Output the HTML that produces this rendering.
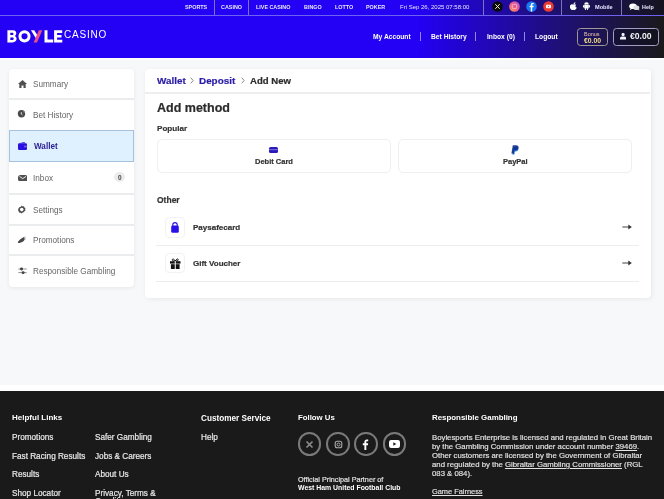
<!DOCTYPE html>
<html><head><meta charset="utf-8">
<style>
*{box-sizing:border-box;margin:0;padding:0}
html,body{width:664px;height:499px;overflow:hidden;background:#f6f8fa;font-family:"Liberation Sans",sans-serif}
.a{position:absolute;white-space:nowrap}
svg{position:absolute;display:block}
.a,.t,.nav,.lbl,.mt,.ft,.fh,.fp{will-change:transform}
#top{position:absolute;left:0;top:0;width:664px;height:16px;background:linear-gradient(90deg,#2400f4 0%,#2400f4 63%,#1c1260 86%,#15131f 100%)}
#top .line{position:absolute;left:0;top:15px;width:664px;height:1px;background:#6f62f0}
.t{position:absolute;top:3.8px;font-size:5.4px;line-height:6px;font-weight:700;color:#e8e6ff;white-space:nowrap}
.sep{position:absolute;top:0;width:1px;height:15px;background:#7c74c0}
#hdr{position:absolute;left:0;top:16px;width:664px;height:42px;background:linear-gradient(90deg,#2400f4 0%,#2400f4 63%,#1a1a1a 100%)}
.nav{position:absolute;top:33px;font-size:6.7px;line-height:7px;font-weight:700;color:#fff;white-space:nowrap}
.nsep{position:absolute;top:32px;width:1px;height:9px;background:#8f86f0}
#sb{position:absolute;left:9px;top:69px;width:125px;height:218px;background:#fff;border-radius:4px;box-shadow:0 1px 4px rgba(0,0,0,.07)}
.lbl{position:absolute;left:33px;font-size:8.2px;line-height:9px;color:#666;white-space:nowrap}
.sdiv{position:absolute;left:9px;width:125px;height:2px;background:#ebecee}
#main{position:absolute;left:145px;top:69px;width:506px;height:229px;background:#fff;border-radius:4px;box-shadow:1px 1px 5px rgba(0,0,0,.07)}
.mt{position:absolute;-webkit-text-stroke-width:0.2px;font-weight:700;color:#2b2b2b;white-space:nowrap}
.pbox{position:absolute;top:139px;height:34px;border:1px solid #efefef;border-radius:5px}
.ibox{position:absolute;left:165px;width:20px;height:21px;border:1px solid #f2f2f2;border-radius:4px}
.mdiv{position:absolute;left:156px;width:483px;height:1px;background:#ededed}
#foot{position:absolute;left:0;top:391px;width:664px;height:108px;background:#1a1a1a}
.ft{position:absolute;-webkit-text-stroke:0.2px #e8e8e8;color:#e8e8e8;font-size:8.2px;line-height:9px;white-space:nowrap}
.fh{position:absolute;color:#fff;font-size:8px;line-height:9px;font-weight:700;white-space:nowrap}
.fp{position:absolute;-webkit-text-stroke:0.15px #e4e4e4;color:#e4e4e4;font-size:7.77px;line-height:9px;white-space:nowrap}
.circ{position:absolute;top:432px;width:23.5px;height:23.5px;border:2px solid #7a7a7a;border-radius:50%}
</style></head><body>

<!-- TOP BAR -->
<div id="top">
  <div class="line"></div>
  <div class="t" style="left:185px">SPORTS</div>
  <div class="sep" style="left:214px"></div>
  <div class="t" style="left:221px">CASINO</div>
  <div class="sep" style="left:248px"></div>
  <div class="t" style="left:256px">LIVE CASINO</div>
  <div class="t" style="left:304px">BINGO</div>
  <div class="t" style="left:335px">LOTTO</div>
  <div class="t" style="left:366px">POKER</div>
  <div class="t" style="left:399.5px;font-size:6px;font-weight:400">Fri Sep 26, 2025 07:58:00</div>
  <div class="sep" style="left:483px"></div>
  <div class="sep" style="left:561px"></div>
  <div class="sep" style="left:621px"></div>
  <!-- social -->
  <svg style="left:492px;top:1px" width="11" height="11" viewBox="0 0 11 11"><circle cx="5.5" cy="5.5" r="5.3" fill="#0b0b0b"/><path d="M3.3 3.2L7.7 7.8M7.7 3.2L3.3 7.8" stroke="#f0f0d0" stroke-width="1"/></svg>
  <svg style="left:509px;top:1px" width="11" height="11" viewBox="0 0 11 11"><defs><linearGradient id="ig" x1="0" y1="1" x2="1" y2="0"><stop offset="0" stop-color="#f9a04a"/><stop offset=".5" stop-color="#ee5a8a"/><stop offset="1" stop-color="#b055d8"/></linearGradient></defs><circle cx="5.5" cy="5.5" r="5.3" fill="url(#ig)"/><rect x="3.3" y="3.3" width="4.4" height="4.4" rx="1.2" fill="none" stroke="#fdd" stroke-width=".7"/></svg>
  <svg style="left:526px;top:1px" width="11" height="11" viewBox="0 0 11 11"><circle cx="5.5" cy="5.5" r="5.3" fill="#1877f2"/><path d="M6.2 10.5V6.2h1.3l.2-1.4H6.2V4c0-.4.1-.7.7-.7h.8V2.1c-.2 0-.6-.1-1.1-.1-1.1 0-1.8.6-1.8 1.8v1H3.6v1.4h1.2v4.3z" fill="#fff"/></svg>
  <svg style="left:543px;top:1px" width="11" height="11" viewBox="0 0 11 11"><circle cx="5.5" cy="5.5" r="5.3" fill="#ee3b32"/><rect x="3" y="3.8" width="5" height="3.4" rx=".8" fill="#fff"/><path d="M4.9 4.6v1.8l1.4-.9z" fill="#ee3b32"/></svg>
  <!-- mobile -->
  <svg style="left:570px;top:2px" width="8" height="8" viewBox="0 0 8 8"><path d="M5.4 0.3c.1.6-.2 1.2-.6 1.5-.4.4-.9.5-1.3.5 0-.5.2-1 .5-1.3.4-.4.9-.6 1.4-.7zM6.9 5.6c-.3.7-.5 1-.9 1.5-.5.6-1 1-1.5.9-.5 0-.6-.3-1.2-.3s-.8.3-1.2.3c-.6 0-1-.5-1.4-1C-.5 5.6-.3 3.8.5 3c.4-.5 1-.7 1.5-.7.6 0 .9.3 1.4.3.5 0 .8-.3 1.4-.3.5 0 1 .2 1.4.7-1.2.7-1 2.4.7 2.6z" fill="#fff"/></svg>
  <svg style="left:582px;top:2px" width="9" height="8" viewBox="0 0 9 8"><path d="M2.2 2.4a2.3 2.1 0 0 1 4.6 0z" fill="#fff"/><rect x="2.2" y="2.8" width="4.6" height="3.6" rx=".5" fill="#fff"/><rect x="1" y="2.9" width="1" height="2.6" rx=".5" fill="#fff"/><rect x="7" y="2.9" width="1" height="2.6" rx=".5" fill="#fff"/><rect x="3" y="6" width="1" height="2" rx=".5" fill="#fff"/><rect x="5" y="6" width="1" height="2" rx=".5" fill="#fff"/></svg>
  <div class="t" style="left:594.7px;font-size:5.6px">Mobile</div>
  <!-- help -->
  <svg style="left:629px;top:3px" width="11" height="8" viewBox="0 0 11 8"><ellipse cx="4" cy="3.2" rx="3.8" ry="2.8" fill="#fff"/><path d="M1.5 5.2L0.8 7.2 3 5.8z" fill="#fff"/><ellipse cx="7.3" cy="4.8" rx="3" ry="2.3" fill="#ddd"/><path d="M9 6.5l1.3 1.3-.2-2z" fill="#ddd"/></svg>
  <div class="t" style="left:642px">Help</div>
</div>

<!-- HEADER -->
<div id="hdr"></div>
<div class="a" style="left:0;top:58px;width:664px;height:2px;background:#fdfdfe"></div>
<svg style="left:0;top:0" width="120" height="58" viewBox="0 0 120 58">
<path fill="#fff" fill-rule="evenodd" d="M7.4 30.3H13C15.5 30.3 16.3 31.8 16.3 33.3C16.3 34.5 15.6 35.4 14.8 35.9C16 36.4 16.6 37.5 16.6 38.8C16.6 40.9 15 42.4 12.6 42.4H7.4ZM10.3 32.8H12.4C13.1 32.8 13.4 33.3 13.4 33.9C13.4 34.5 13.1 35 12.4 35H10.3ZM10.3 37.4H12.7C13.4 37.4 13.7 38 13.7 38.6C13.7 39.3 13.4 39.9 12.7 39.9H10.3Z"/>
<circle cx="24.5" cy="36.35" r="4.55" stroke="#fff" stroke-width="3" fill="none"/>
<path fill="#fff" d="M30.9 30.3H34.2L37.4 35.3 35.7 38.1Z"/>
<path fill="#e8508a" d="M38.9 30.3H42.3L37 42.4H33.6Z"/>
<path fill="#fff" d="M44.5 30.3H47.5V39.5H53.2V42.4H44.5Z"/>
<path fill="#fff" d="M54.1 30.3H62.2V33H57.1V35H61.5V37.6H57.1V39.7H62.3V42.4H54.1Z"/>
</svg>
<div class="a" style="left:64px;top:29.5px;font-size:10px;line-height:10px;letter-spacing:0.8px;color:#fff">CASINO</div>
</div>
<div class="nav" style="left:373px">My Account</div>
<div class="nsep" style="left:420px"></div>
<div class="nav" style="left:431px">Bet History</div>
<div class="nsep" style="left:475px"></div>
<div class="nav" style="left:487px">Inbox (0)</div>
<div class="nsep" style="left:524px"></div>
<div class="nav" style="left:535px">Logout</div>
<div class="a" style="left:576.5px;top:27.5px;width:30.5px;height:18.3px;border:1.8px solid #a09a94;border-radius:3.5px"></div>
<div class="a" style="left:583.5px;top:31px;font-size:5.5px;line-height:6px;color:#eccaae">Bonus</div>
<div class="a" style="left:583.5px;top:37px;font-size:6.8px;line-height:7px;font-weight:700;color:#f4de88">€0.00</div>
<div class="a" style="left:613px;top:27.5px;width:46px;height:18.3px;border:1.8px solid #a39dc6;border-radius:3.5px;background:rgba(10,8,25,.35)"></div>
<svg style="left:620px;top:33.2px" width="6.2" height="6.4" viewBox="0 0 6.2 6.4"><rect x="1.6" y="0" width="3" height="3" rx="1.1" fill="#f4f2ff"/><path d="M0 6.4V5.2C0 4.1 1 3.5 3.1 3.5S6.2 4.1 6.2 5.2V6.4z" fill="#f4f2ff"/></svg>
<div class="a" style="left:630px;top:32px;font-size:8.6px;line-height:9px;font-weight:700;color:#f2f2f2">€0.00</div>

<!-- SIDEBAR -->
<div id="sb"></div>
<div class="sdiv" style="top:97.6px"></div>
<div class="sdiv" style="top:192.9px"></div>
<div class="sdiv" style="top:223.6px"></div>
<div class="sdiv" style="top:254px"></div>
<div class="a" style="left:9px;top:130px;width:125px;height:32px;background:#dff0fe;border:1px solid #a6c2dc"></div>

<svg style="left:17.5px;top:80px" width="9" height="8" viewBox="0 0 9 8"><path d="M4.5 0L9 4H7.7V8H5.5V5.5H3.5V8H1.3V4H0z" fill="#505050"/></svg>
<div class="lbl" style="top:79.5px">Summary</div>

<svg style="left:17.2px;top:110.2px" width="9" height="7.6" viewBox="0 0 9 7.6"><circle cx="4.5" cy="3.8" r="3.7" fill="#4a4a4a"/><path d="M6.3 .6A3.7 3.7 0 0 1 8.1 2.6L6.6 2.4z" fill="#999"/><path d="M4.3 2.2V4L5.5 4.9" stroke="#fff" stroke-width=".8" fill="none"/></svg>
<div class="lbl" style="top:110.5px">Bet History</div>

<svg style="left:18px;top:142px" width="9" height="8" viewBox="0 0 9 8"><path d="M1.2 1.2L6.5 0 7 1.2z" fill="#2a10e0"/><rect x="0" y="1.2" width="9" height="6.8" rx="1.2" fill="#2a10e0"/><rect x="6" y="3.6" width="3" height="2" rx=".8" fill="#6a5cf0"/></svg>
<div class="a" style="left:34px;top:142px;font-size:8.15px;line-height:9px;font-weight:700;color:#2d2295">Wallet</div>

<svg style="left:17.5px;top:174.5px" width="9.5" height="6.5" viewBox="0 0 9.5 6.5"><rect x="0" y="0" width="9.5" height="6.5" rx="2.5" fill="#505050"/><path d="M1.5 1.4L4.75 3.6 8 1.4" stroke="#fff" stroke-width=".9" fill="none"/></svg>
<div class="lbl" style="top:173.5px">Inbox</div>
<div class="a" style="left:114px;top:172px;width:11px;height:10px;border-radius:5px;background:#ececec"></div>
<div class="a" style="left:117.5px;top:173.8px;font-size:6.5px;line-height:7px;font-weight:700;color:#444">0</div>

<svg style="left:17.3px;top:204.8px" width="9.5" height="9.2" viewBox="0 0 10 9"><path d="M5 .3l1 .9 1.3-.2.4 1.3 1.2.6-.4 1.3.5 1.2-1.2.6-.3 1.3-1.3-.1L5 8.7l-1-.9-1.3.2-.4-1.3-1.2-.6.4-1.3L1 3.6l1.2-.6.3-1.3 1.3.1z" fill="#4c4c4c"/><circle cx="5" cy="4.5" r="1.9" fill="#fff"/></svg>
<div class="lbl" style="top:205.5px">Settings</div>

<svg style="left:17px;top:236px" width="9" height="8" viewBox="0 0 9 8"><path d="M.7 6.2C1.5 4.8 3 3.2 4.4 2.4L6.6 1.1 7.9 3.6 6.2 5.4C4.8 6.2 3 7 1.3 7.1z" fill="#484848"/><path d="M6.6 1.1L8.2 .6 8.8 3 7.9 3.6z" fill="#aaa"/></svg>
<div class="lbl" style="top:235.5px">Promotions</div>

<svg style="left:17.5px;top:267.3px" width="9" height="7.5" viewBox="0 0 9 7.5"><path d="M.3 2h8.4M.3 5.6h8.4" stroke="#888" stroke-width=".9"/><rect x="2" y=".6" width="3" height="2.8" rx="1.3" fill="#444"/><rect x="3.6" y="4.2" width="3" height="2.8" rx="1.3" fill="#444"/></svg>
<div class="lbl" style="top:266.5px">Responsible Gambling</div>

<!-- MAIN -->
<div id="main"></div>
<div class="a" style="left:145px;top:92px;width:505px;height:1.5px;background:#eeeeef"></div>
<div class="mt" style="left:156.5px;top:75.5px;font-size:9.9px;line-height:10px;color:#2a1ca6">Wallet</div>
<svg style="left:190px;top:77px" width="4" height="7" viewBox="0 0 4 7"><path d="M.7.7L3.2 3.5.7 6.3" stroke="#888" stroke-width="1" fill="none"/></svg>
<div class="mt" style="left:199px;top:75.5px;font-size:9.9px;line-height:10px;color:#2a1ca6">Deposit</div>
<svg style="left:240.5px;top:77px" width="4" height="7" viewBox="0 0 4 7"><path d="M.7.7L3.2 3.5.7 6.3" stroke="#888" stroke-width="1" fill="none"/></svg>
<div class="mt" style="left:249.5px;top:75.5px;font-size:9.6px;line-height:10px;color:#2b2b2b">Add New</div>

<div class="mt" style="left:156.5px;top:101.5px;font-size:12.5px;line-height:13px">Add method</div>
<div class="mt" style="left:156.5px;top:124px;font-size:8.1px;line-height:9px;color:#333">Popular</div>

<div class="pbox" style="left:156.5px;width:234px"></div>
<svg style="left:268.8px;top:146.8px" width="9" height="6" viewBox="0 0 9 6"><rect x="0" y="0" width="9" height="6" rx="1.6" fill="#2a1ab8"/><rect x="0" y="2" width="9" height="1.2" fill="#6a60e0"/></svg>
<div class="mt" style="left:254.5px;top:157.5px;font-size:7.5px;line-height:8px;color:#333">Debit Card</div>

<div class="pbox" style="left:397.5px;width:234.5px"></div>
<svg style="left:510.5px;top:144.8px" width="8" height="10" viewBox="0 0 8 10"><path d="M2.8 2h2.5c1.6 0 2.3.8 2.1 2.1-.2 1.6-1.3 2.4-2.8 2.4h-.8L3.4 9.6H1.3z" fill="#1d78d8"/><path d="M1.8.2h3.3c1.8 0 2.7.9 2.5 2.4-.2 1.8-1.5 2.7-3.2 2.7H3.3L2.8 8.5H.4z" fill="#0f2f8a" opacity=".9"/></svg>
<div class="mt" style="left:503px;top:157.5px;font-size:7.5px;line-height:8px;color:#333">PayPal</div>

<div class="mt" style="left:156.5px;top:196px;font-size:8.5px;line-height:9px;color:#333">Other</div>

<div class="ibox" style="top:217px"></div>
<svg style="left:171px;top:221.5px" width="8" height="11" viewBox="0 0 8 11"><path d="M1.8 4V2.8a2.2 2.2 0 0 1 4.4 0V4" stroke="#2a10e8" stroke-width="1.1" fill="none"/><rect x=".2" y="3.6" width="7.6" height="7.2" rx="1.4" fill="#2a10e8"/></svg>
<div class="mt" style="left:193px;top:222.5px;font-size:8px;line-height:9px;color:#333">Paysafecard</div>
<svg style="left:621.5px;top:224px" width="10" height="6" viewBox="0 0 10 6"><path d="M0.3 3H7" stroke="#555" stroke-width="1.1"/><path d="M6.3 .6L9.8 3 6.3 5.4z" fill="#333"/></svg>
<div class="mdiv" style="top:245px"></div>

<div class="ibox" style="top:253px;height:20px"></div>
<svg style="left:170px;top:257.5px" width="10.5" height="11" viewBox="0 0 10.5 11"><path d="M5.25 3C4 .5 2 .6 2.2 2 2.4 3 4.2 3 5.25 3 6.3 3 8.1 3 8.3 2 8.5.6 6.5.5 5.25 3z" stroke="#111" stroke-width="1" fill="none"/><rect x="0" y="3.2" width="10.5" height="2.4" fill="#111"/><rect x=".9" y="6.2" width="8.7" height="4.8" fill="#111"/><rect x="4.75" y="3" width="1" height="8" fill="#fff"/></svg>
<div class="mt" style="left:193px;top:258.5px;font-size:8px;line-height:9px;color:#333">Gift Voucher</div>
<svg style="left:621.5px;top:260px" width="10" height="6" viewBox="0 0 10 6"><path d="M0.3 3H7" stroke="#555" stroke-width="1.1"/><path d="M6.3 .6L9.8 3 6.3 5.4z" fill="#333"/></svg>
<div class="mdiv" style="top:281px"></div>

<!-- FOOTER -->
<div class="a" style="left:0;top:385px;width:664px;height:6px;background:#fff"></div>
<div id="foot"></div>
<div class="fh" style="left:11.5px;top:412.8px">Helpful Links</div>
<div class="ft" style="left:11.5px;top:433px">Promotions</div>
<div class="ft" style="left:11.5px;top:451.5px">Fast Racing Results</div>
<div class="ft" style="left:11.5px;top:470px">Results</div>
<div class="ft" style="left:11.5px;top:488.5px">Shop Locator</div>
<div class="ft" style="left:95px;top:433px">Safer Gambling</div>
<div class="ft" style="left:95px;top:451.5px">Jobs &amp; Careers</div>
<div class="ft" style="left:95px;top:470px">About Us</div>
<div class="ft" style="left:95px;top:488.5px">Privacy, Terms &amp;</div>
<div class="ft" style="left:95px;top:496.5px">Conditions</div>

<div class="fh" style="left:200.5px;top:413.5px;font-size:8.2px">Customer Service</div>
<div class="ft" style="left:200.5px;top:433px">Help</div>

<div class="fh" style="left:298px;top:413px;font-size:7.8px">Follow Us</div>
<div class="circ" style="left:297.5px"></div>
<div class="circ" style="left:326px"></div>
<div class="circ" style="left:354px"></div>
<div class="circ" style="left:382.5px"></div>
<svg style="left:305px;top:439.5px" width="9" height="9" viewBox="0 0 9 9"><path d="M1.5 1.5L7.5 7.5M7.5 1.5L1.5 7.5" stroke="#8a8a8a" stroke-width="1.7"/></svg>
<svg style="left:333.5px;top:439.5px" width="9" height="9" viewBox="0 0 9 9"><rect x="1.2" y="1.2" width="6.6" height="6.6" rx="2" stroke="#aaa" stroke-width="1.1" fill="none"/><circle cx="4.5" cy="4.5" r="1.5" stroke="#aaa" stroke-width="1" fill="none"/></svg>
<svg style="left:362px;top:438.5px" width="7" height="11" viewBox="0 0 7 11"><path d="M4.3 11V6.2h1.6l.3-1.9H4.3V3.1c0-.5.2-.9.9-.9h1V.5C5.9.4 5.4.4 4.8.4 3.3.4 2.4 1.3 2.4 2.9v1.4H.8v1.9h1.6V11z" fill="#fff"/></svg>
<svg style="left:389px;top:440px" width="11" height="8" viewBox="0 0 11 8"><rect x="0" y="0" width="11" height="8" rx="2.2" fill="#fff"/><path d="M4.3 2.2v3.6L7.3 4z" fill="#1a1a1a"/></svg>
<div class="ft" style="left:298px;top:474.7px;font-size:7.23px;color:#ddd">Official Principal Partner of</div>
<div class="fh" style="left:298px;top:483px;font-size:6.9px">West Ham United Football Club</div>

<div class="fh" style="left:432px;top:413px;font-size:7.9px">Responsible Gambling</div>
<div class="fp" style="left:432px;top:433px">Boylesports Enterprise is licensed and regulated in Great Britain</div>
<div class="fp" style="left:432px;top:442px">by the Gambling Commission under account number <u>39469</u>.</div>
<div class="fp" style="left:432px;top:451px">Other customers are licensed by the Government of Gibraltar</div>
<div class="fp" style="left:432px;top:460px">and regulated by the <u>Gibraltar Gambling Commissioner</u> (RGL</div>
<div class="fp" style="left:432px;top:469px">083 &amp; 084).</div>
<div class="fp" style="left:432px;top:487px;font-size:7.4px"><u>Game Fairness</u></div>

</body></html>
